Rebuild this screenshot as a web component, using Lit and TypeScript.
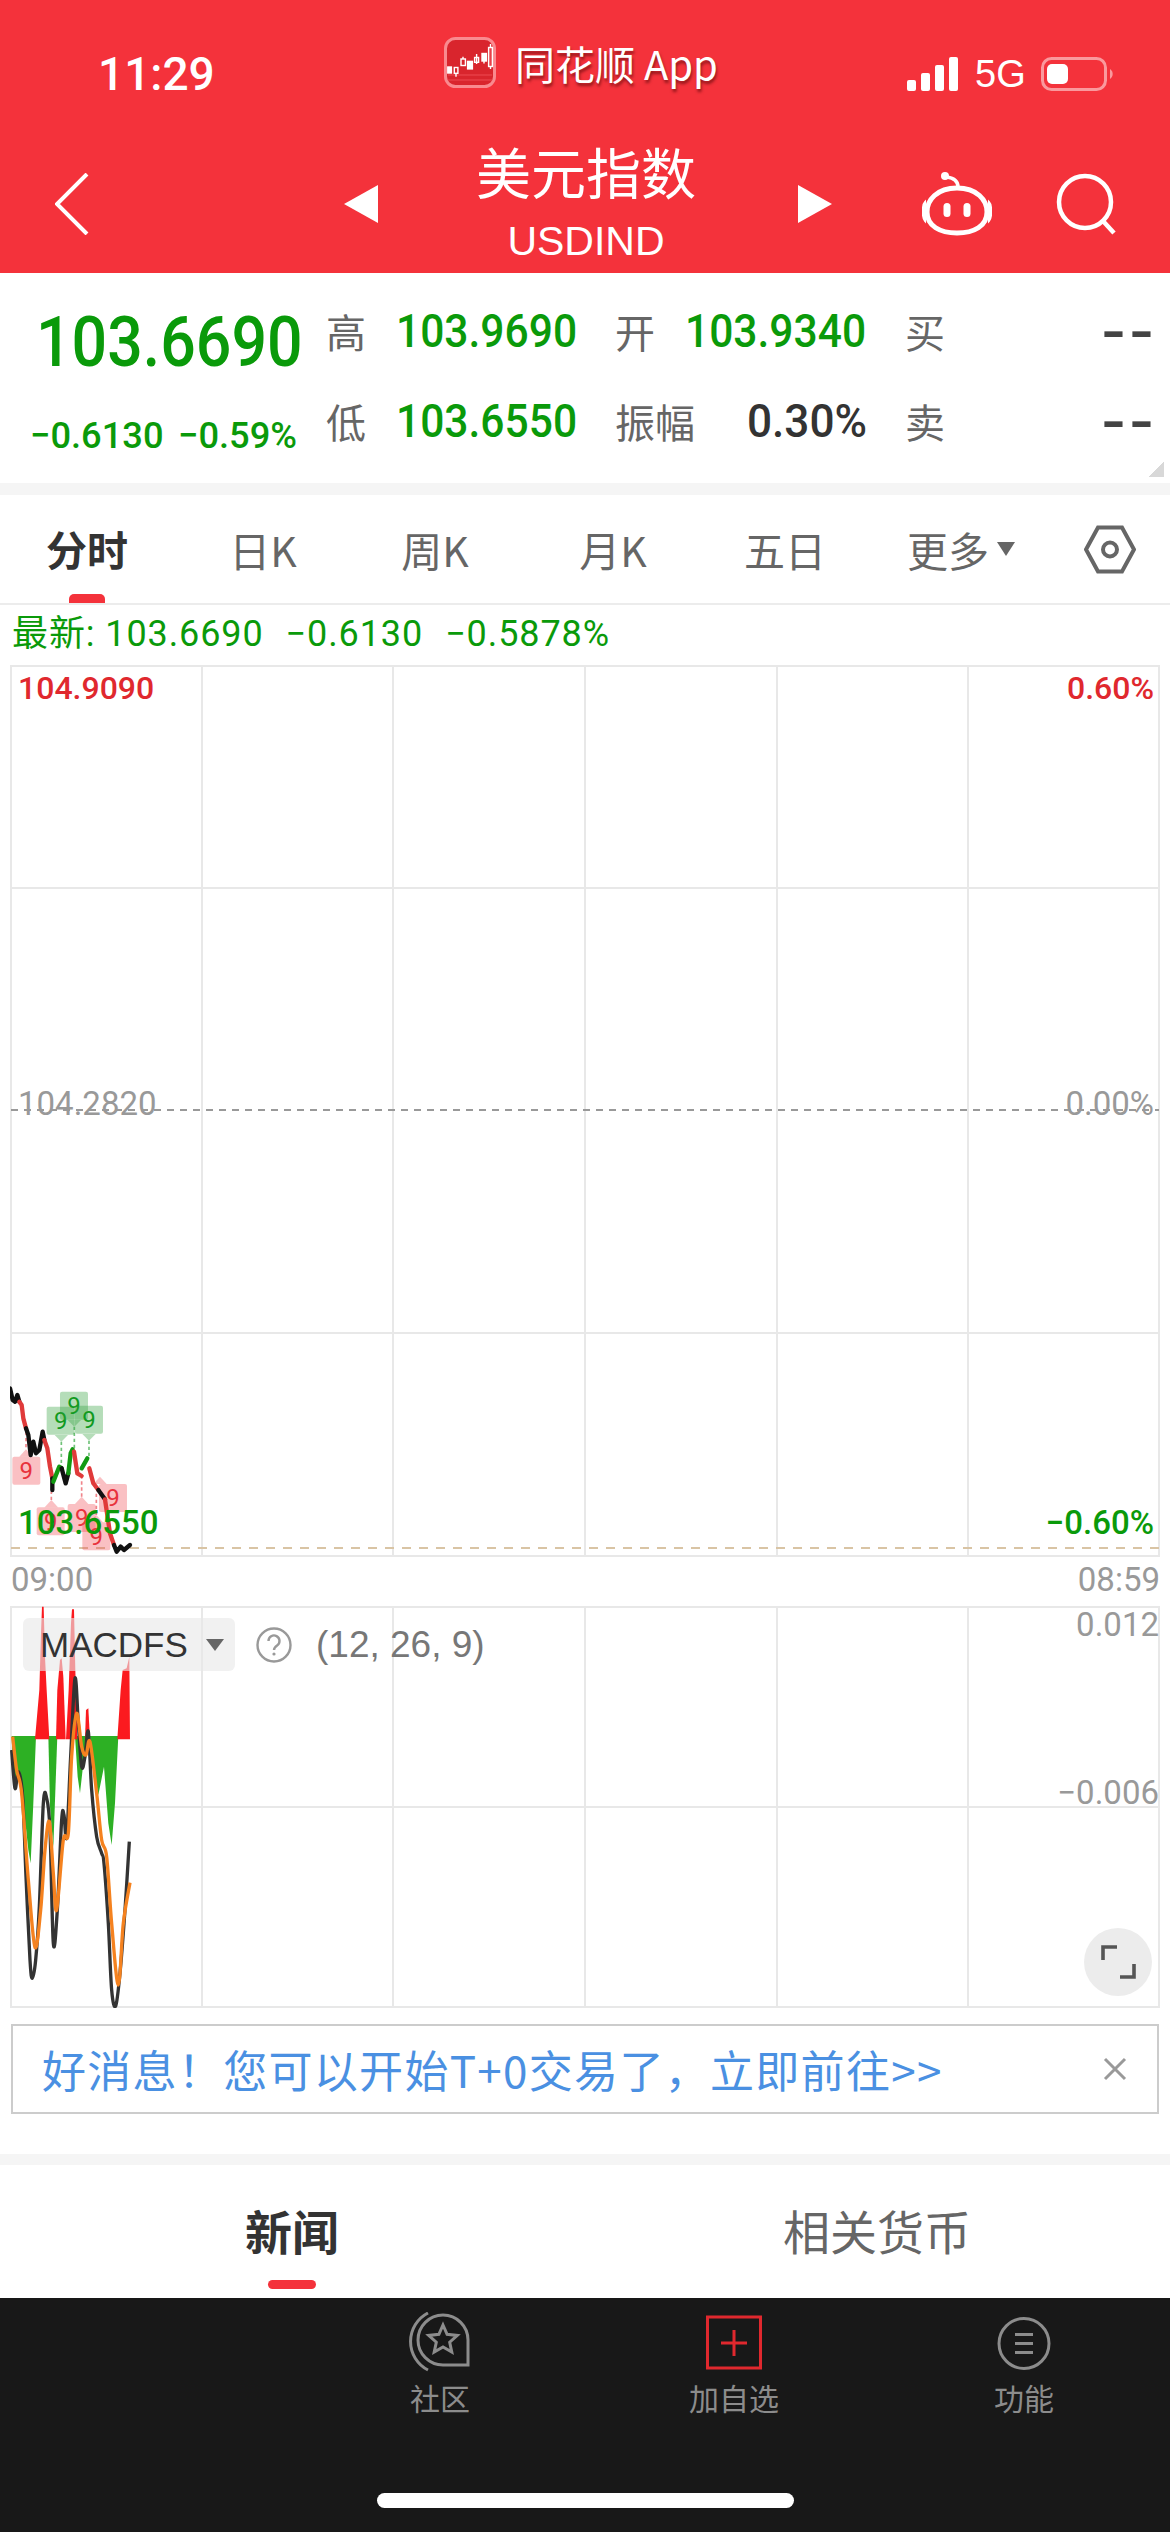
import { LitElement, css, html, svg } from "lit";
import { customElement } from "lit/decorators.js";

// chart traces are written in pixels of a 3x crop, scaled down by the <g> wrapper
const PRICE_SEGMENTS: [string, string][] = [
  ["#111", "30,85 38,120 45,125 52,105 58,125"],
  ["#e03a3a", "58,125 65,135 70,175 78,205"],
  ["#111", "78,205 85,225 92,285 100,245 108,280 118,270 128,215 133,240"],
  ["#e03a3a", "133,240 142,265 150,320 157,355"],
  ["#111", "157,355 157,390"],
  ["#129a12", "160,365 178,320 185,325"],
  ["#111", "185,325 197,370 205,340"],
  ["#129a12", "205,340 212,280 218,268"],
  ["#e03a3a", "222,275 232,340 245,348"],
  ["#129a12", "245,325 262,295"],
  ["#e03a3a", "268,325 280,370 295,390"],
  ["#111", "295,390 315,418"],
  ["#e03a3a", "315,418 330,520 342,555"],
  ["#111", "342,555 350,575 362,560 372,570 390,555"],
];

const NINE_TAGS = [
  { x: 37, y: 290, up: true, tipX: 78, tipY: 262, toY: 210, red: true },
  { x: 110, y: 442, up: true, tipX: 154, tipY: 420, toY: 395, red: true },
  { x: 203, y: 432, up: true, tipX: 245, tipY: 410, toY: 350, red: true },
  { x: 247, y: 487, up: true, tipX: 289, tipY: 465, toY: 395, red: true },
  { x: 297, y: 372, up: true, tipX: 300, tipY: 372, toY: 372, red: true },
  { x: 140, y: 140, up: false, tipX: 184, tipY: 245, toY: 320, red: false },
  { x: 180, y: 95, up: false, tipX: 223, tipY: 200, toY: 268, red: false },
  { x: 225, y: 137, up: false, tipX: 267, tipY: 242, toY: 295, red: false },
];

const MACD_RED = [
  "105,448 118,300 123,130 126,50 131,50 135,200 140,300 148,448",
  "168,448 172,300 180,210 185,205 190,260 197,448",
  "198,448 206,300 213,100 216,58 222,58 226,240 232,448",
  "255,448 258,360 265,355 270,448",
  "352,448 362,300 368,240 380,235 388,200 390,448",
];
const MACD_GREEN = [
  "35,438 40,560 45,595 50,540 60,560 70,640 85,780 92,820 100,640 108,438",
  "145,438 150,650 160,770 172,438",
  "225,438 233,560 240,610 250,520 270,438",
  "270,438 285,560 295,615 312,530 325,700 335,765 345,640 355,438",
];
const MACD_DIF: number[][] = [
  [35, 480], [45, 595], [55, 545], [68, 620], [78, 860], [90, 1110], [97, 1165], [107, 1110], [118, 950],
  [130, 640], [140, 625], [150, 720], [160, 1060], [172, 960], [185, 690], [192, 675], [200, 740], [212, 500],
  [225, 265], [235, 400], [245, 530], [255, 500], [265, 425], [275, 600], [290, 740], [305, 790], [312, 820],
  [325, 1000], [335, 1200], [347, 1248], [360, 1150], [375, 960], [388, 755],
];
const MACD_DEA: number[][] = [
  [38, 440], [50, 540], [65, 610], [85, 870], [105, 1072], [122, 960], [135, 780], [148, 695], [160, 850],
  [170, 960], [190, 750], [205, 730], [215, 500], [230, 370], [245, 470], [258, 495], [270, 455], [290, 610],
  [305, 750], [320, 800], [335, 1000], [355, 1185], [370, 1000], [390, 878],
];

const V_LINES = [202, 393, 585, 777, 968];

// catmull-rom through the points, the indicator lines are smooth in the app
function smooth(pts: number[][]) {
  let d = `M${pts[0][0]} ${pts[0][1]}`;
  for (let i = 0; i < pts.length - 1; i++) {
    const p0 = pts[Math.max(i - 1, 0)];
    const p1 = pts[i];
    const p2 = pts[i + 1];
    const p3 = pts[Math.min(i + 2, pts.length - 1)];
    const c1x = p1[0] + (p2[0] - p0[0]) / 6;
    const c1y = p1[1] + (p2[1] - p0[1]) / 6;
    const c2x = p2[0] - (p3[0] - p1[0]) / 6;
    const c2y = p2[1] - (p3[1] - p1[1]) / 6;
    d += `C${c1x} ${c1y} ${c2x} ${c2y} ${p2[0]} ${p2[1]}`;
  }
  return d;
}

@customElement("app-root")
export class AppRoot extends LitElement {
  static styles = css`
    :host {
      display: block;
      width: 1170px;
      height: 2532px;
      background: #fff;
      overflow: hidden;
      font-family: Roboto, "Noto Sans CJK SC", sans-serif;
    }
    .head {
      height: 273px;
      background: #f4323b;
      color: #fff;
      box-sizing: border-box;
      padding-top: 36px;
    }
    .status {
      display: grid;
      grid-template-columns: 346px 71px 392px 134px 1fr;
      margin-left: 98px;
      height: 56px;
      align-items: end;
    }
    .time {
      font-size: 46px;
      font-weight: 500;
      line-height: 36px;
    }
    .logo-wrap {
      align-self: start;
    }
    .logo {
      display: block;
    }
    .app-name {
      font-family: "Noto Sans CJK SC", sans-serif;
      font-size: 40px;
      line-height: 54px;
      text-shadow: 1px 3px 3px rgba(70, 0, 0, 0.55);
      align-self: start;
    }
    .signal {
      display: flex;
      align-items: flex-end;
      gap: 5px;
      height: 34px;
      margin-bottom: 1px;
    }
    .signal i {
      width: 9px;
      background: #fff;
      border-radius: 2px;
    }
    .net {
      font-family: "Liberation Sans", sans-serif;
      font-size: 38px;
      line-height: 34px;
      margin-left: 12px;
    }
    .battery {
      display: flex;
      align-items: center;
      margin-bottom: 1px;
    }
    .nav {
      display: grid;
      grid-template-columns: 344px 34px 420px 34px 90px 70px 64px 60px;
      align-items: center;
      height: 138px;
      margin-top: 43px;
    }
    .back {
      margin-left: 55px;
      display: block;
    }
    .title {
      text-align: center;
      align-self: start;
      margin-top: -4px;
      padding-right: 4px;
    }
    .title b {
      display: block;
      font-family: "Noto Sans CJK SC", sans-serif;
      font-weight: 400;
      font-size: 55px;
      line-height: 78px;
    }
    .title span {
      display: block;
      font-family: "Liberation Sans", sans-serif;
      font-size: 41px;
      line-height: 46px;
      margin-top: 9px;
    }
    .quote {
      height: 210px;
      box-sizing: border-box;
      position: relative;
      display: grid;
      grid-template-columns: 326px 1fr;
    }
    .corner {
      position: absolute;
      right: 6px;
      bottom: 6px;
      width: 15px;
      height: 15px;
      background: linear-gradient(135deg, transparent 50%, #d8d8d8 50%);
    }
    .cond {
      display: inline-block;
      transform: scaleX(0.925);
      transform-origin: 0 50%;
      white-space: nowrap;
    }
    .price {
      padding: 29px 0 0 35px;
      color: #0a9a0a;
    }
    .price b {
      display: block;
      font-size: 70px;
      line-height: 80px;
      font-weight: 500;
      margin-left: 1px;
    }
    .price b .cond {
      transform: scaleX(0.895);
    }
    .price p {
      margin: 32px 0 0 -5px;
      font-size: 37px;
      font-weight: 500;
      line-height: 44px;
      white-space: nowrap;
      display: flex;
    }
    .price p .cond {
      width: 160px;
      transform: scaleX(0.98);
    }
    .stats {
      display: grid;
      grid-template-columns: 70px 219px 70px 220px 40px 207px;
      grid-auto-rows: 90px;
      padding-top: 13px;
      align-items: center;
      height: 180px;
    }
    .stats .k {
      font-family: "Noto Sans CJK SC", sans-serif;
      font-size: 40px;
      line-height: 90px;
      color: #666;
      white-space: nowrap;
    }
    .stats .v {
      font-size: 46px;
      font-weight: 500;
      color: #0a9a0a;
      line-height: 90px;
    }
    .stats .dark {
      color: #333;
      text-align: right;
      padding-right: 38px;
    }
    .stats .dark .cond {
      transform: scaleX(0.96);
      transform-origin: 100% 50%;
    }
    .stats .none {
      color: #444;
      font-size: 76px;
      font-weight: 400;
      letter-spacing: 7px;
      text-align: right;
      line-height: 86px;
      margin-right: -7px;
      white-space: nowrap;
    }
    .band {
      height: 12px;
      background: #f5f5f5;
    }
    .periods {
      display: grid;
      grid-template-columns: 174px 178px 166px 190px 154px 198px 100px;
      height: 110px;
      border-bottom: 2px solid #ececec;
      box-sizing: border-box;
      align-items: center;
      justify-items: center;
      font-family: "Noto Sans CJK SC", sans-serif;
      font-size: 41px;
      color: #666;
    }
    .periods .on {
      color: #333;
      font-weight: 700;
      align-self: stretch;
      display: flex;
      align-items: center;
      position: relative;
      padding-bottom: 2px;
    }
    .periods .on::after {
      content: "";
      position: absolute;
      left: 23px;
      right: 23px;
      bottom: 0;
      height: 9px;
      border-radius: 5px 5px 0 0;
      background: #f4323b;
    }
    .more {
      display: flex;
      align-items: center;
      gap: 8px;
    }
    .latest {
      height: 60px;
      display: flex;
      align-items: baseline;
      gap: 22px;
      padding-left: 12px;
      color: #0a9a0a;
      font-size: 36px;
      line-height: 58px;
      letter-spacing: 0.9px;
      white-space: nowrap;
    }
    .chart {
      position: relative;
      margin-left: 10px;
      width: 1150px;
    }
    .chart > svg {
      display: block;
    }
    .grid-line {
      stroke: #e8e8e8;
      stroke-width: 2;
      fill: none;
    }
    .price-box {
      height: 892px;
    }
    .lab {
      position: absolute;
      font-size: 33px;
      line-height: 40px;
      white-space: nowrap;
    }
    .l {
      left: 8px;
    }
    .r {
      right: 6px;
    }
    .red {
      color: #e0282e;
      font-size: 32px;
      font-weight: 500;
    }
    .gray {
      color: #999;
    }
    .green {
      color: #0a9a0a;
      font-weight: 500;
    }
    .nine {
      font: 72px Roboto, sans-serif;
      text-anchor: middle;
    }
    .times {
      height: 49px;
      margin: 0 10px 0 11px;
      display: flex;
      justify-content: space-between;
      align-items: center;
      color: #999;
      font-size: 33px;
      padding-bottom: 5px;
      box-sizing: border-box;
    }
    .macd-box {
      height: 402px;
    }
    .macd-tag {
      position: absolute;
      left: 13px;
      top: 12px;
      display: flex;
      align-items: center;
    }
    .pill {
      width: 212px;
      height: 53px;
      box-sizing: border-box;
      padding-left: 17px;
      gap: 18px;
      display: flex;
      align-items: center;
      background: rgba(232, 232, 232, 0.62);
      border-radius: 6px;
      color: #333;
      font-family: "Liberation Sans", sans-serif;
      font-size: 35px;
    }
    .args {
      font-family: "Liberation Sans", sans-serif;
      font-size: 37px;
      color: #777;
      margin-left: 24px;
    }
    .help {
      margin-left: 21px;
      display: block;
    }
    .expand {
      position: absolute;
      left: 1074px;
      top: 322px;
      width: 68px;
      height: 68px;
      border-radius: 50%;
      background: #ececec;
      display: flex;
      align-items: center;
      justify-content: center;
    }
    .banner {
      margin: 16px 11px 0;
      height: 90px;
      border: 2px solid #ccc;
      box-sizing: border-box;
      display: flex;
      align-items: center;
      justify-content: space-between;
      padding: 0 30px 0 29px;
      color: #4a90e2;
      font-family: "Noto Sans CJK SC", sans-serif;
      font-size: 44px;
      letter-spacing: 1.3px;
      white-space: nowrap;
    }
    .band.low {
      margin-top: 40px;
      height: 11px;
    }
    .news {
      height: 133px;
      display: grid;
      grid-template-columns: 584px 1fr;
      font-family: "Noto Sans CJK SC", sans-serif;
      font-size: 47px;
      color: #666;
      justify-items: center;
      align-items: center;
    }
    .news span {
      padding-bottom: 5px;
    }
    .news .on {
      color: #333;
      font-weight: 700;
      position: relative;
      align-self: stretch;
      display: flex;
      align-items: center;
    }
    .news .on::after {
      content: "";
      position: absolute;
      left: 23px;
      right: 23px;
      bottom: 9px;
      height: 9px;
      border-radius: 5px;
      background: #f4323b;
    }
    .foot {
      height: 234px;
      background: #181818;
      box-sizing: border-box;
      padding-top: 14px;
    }
    .tools {
      display: grid;
      grid-template-columns: 590px 288px 292px;
      height: 125px;
    }
    .tool {
      display: flex;
      flex-direction: column;
      align-items: center;
      color: #8c8c8c;
      font-family: "Noto Sans CJK SC", sans-serif;
      font-size: 30px;
      line-height: 40px;
    }
    .tool svg {
      display: block;
      margin-bottom: 5px;
    }
    .tool.first {
      padding-left: 290px;
    }
    .home {
      width: 417px;
      height: 15px;
      margin: 56px 0 0 377px;
      border-radius: 8px;
      background: #fff;
    }
  `;

  private renderLogo() {
    return html`<svg class="logo" width="52" height="54" viewBox="0 0 52 54">
      <rect x="1.5" y="2.5" width="49" height="48" rx="10" fill="#d9252d" stroke="#f98a8f" stroke-width="3" />
      <path d="M4 39H48M4 44H48" stroke="#ee4a52" stroke-width="1" />
      <g fill="none" stroke="#fff" stroke-width="1.4">
        <path d="M12 37.3V40.7M19 20.7V23M32.6 18V28M40 25V27.5M46.5 8V33" />
        <rect x="3.8" y="31" width="3.6" height="6" fill="#fff" />
        <rect x="10.3" y="31.5" width="3.6" height="5.8" />
        <rect x="17" y="23" width="4.4" height="6.5" />
        <rect x="23.6" y="25.4" width="4.8" height="7.5" fill="#fff" />
        <rect x="30.6" y="21.5" width="4" height="4.8" />
        <rect x="38" y="17.5" width="4.4" height="7.5" fill="#fff" />
        <rect x="44.6" y="11.5" width="3.8" height="19" fill="#e84049" />
      </g>
    </svg>`;
  }

  private renderPriceChart() {
    return html`<div class="chart price-box">
      <svg width="1150" height="892" viewBox="10 665 1150 892">
        <rect class="grid-line" x="11" y="666" width="1148" height="890" />
        ${V_LINES.map((x) => svg`<line class="grid-line" x1=${x} x2=${x} y1="666" y2="1556" />`)}
        <line class="grid-line" x1="11" x2="1159" y1="888" y2="888" />
        <line class="grid-line" x1="11" x2="1159" y1="1333" y2="1333" />
        <line x1="11" x2="1159" y1="1110" y2="1110" stroke="#999" stroke-width="2" stroke-dasharray="7 6" />
        <line x1="11" x2="1159" y1="1548" y2="1548" stroke="#d9c4a4" stroke-width="2" stroke-dasharray="9 8" />
        <g transform="translate(0 1360) scale(0.3333)">
          ${NINE_TAGS.map((t) => {
            const fill = t.red ? "rgba(240,70,80,.34)" : "rgba(50,160,60,.36)";
            const ink = t.red ? "#e8323c" : "#119a1f";
            const tri = t.up
              ? `${t.tipX - 20},${t.y} ${t.tipX},${t.y - 22} ${t.tipX + 20},${t.y}`
              : `${t.tipX - 20},${t.y + 85} ${t.tipX},${t.y + 105} ${t.tipX + 20},${t.y + 85}`;
            return svg`
              <line x1=${t.tipX} x2=${t.tipX} y1=${t.tipY} y2=${t.toY} stroke=${ink} stroke-opacity=".6" stroke-width="5" stroke-dasharray="10 8" />
              <rect x=${t.x} y=${t.y} width="84" height="84" rx="6" fill=${fill} />
              <polygon points=${tri} fill=${fill} />
              <text class="nine" x=${t.x + 42} y=${t.y + 67} fill=${ink}>9</text>`;
          })}
          ${PRICE_SEGMENTS.map(
            ([color, pts]) =>
              svg`<polyline points=${pts} fill="none" stroke=${color} stroke-width="13" stroke-linejoin="round" stroke-linecap="round" />`
          )}
        </g>
      </svg>
      <span class="lab l red" style="top:3px">104.9090</span>
      <span class="lab r red" style="top:3px">0.60%</span>
      <span class="lab l gray" style="top:419px">104.2820</span>
      <span class="lab r gray" style="top:419px">0.00%</span>
      <span class="lab l green" style="top:838px">103.6550</span>
      <span class="lab r green" style="top:838px">−0.60%</span>
    </div>`;
  }

  private renderMacd() {
    return html`<div class="chart macd-box">
      <svg width="1150" height="402" viewBox="10 1606 1150 402">
        <rect class="grid-line" x="11" y="1607" width="1148" height="400" />
        ${V_LINES.map((x) => svg`<line class="grid-line" x1=${x} x2=${x} y1="1607" y2="2007" />`)}
        <line class="grid-line" x1="11" x2="1159" y1="1807" y2="1807" />
        <g transform="translate(0 1590) scale(0.3333)">
          ${MACD_GREEN.map((p) => svg`<polygon points=${p} fill="#2db024" />`)}
          ${MACD_RED.map((p) => svg`<polygon points=${p} fill="#fb1a1f" />`)}
          <path d=${smooth(MACD_DIF)} fill="none" stroke="#333" stroke-width="10" />
          <path d=${smooth(MACD_DEA)} fill="none" stroke="#f5821f" stroke-width="10" />
        </g>
      </svg>
      <div class="macd-tag">
        <span class="pill">
          MACDFS
          <svg width="18" height="12" viewBox="0 0 18 12"><path d="M0 0H18L9 12Z" fill="#666" /></svg>
        </span>
        <svg class="help" width="36" height="36" viewBox="0 0 36 36">
          <circle cx="18" cy="18" r="16.5" fill="none" stroke="#999" stroke-width="2.4" />
          <path d="M12.5 14a5.5 5.5 0 1 1 8.6 4.5c-2 1.4-3.1 2.3-3.1 4.6" fill="none" stroke="#999" stroke-width="2.4" />
          <circle cx="18" cy="27" r="1.6" fill="#999" />
        </svg>
        <span class="args">(12, 26, 9)</span>
      </div>
      <span class="lab r gray" style="top:-1px;right:1px">0.012</span>
      <span class="lab r gray" style="top:167px;right:1px">−0.006</span>
      <div class="expand">
        <svg width="38" height="38" viewBox="0 0 38 38" fill="none" stroke="#555" stroke-width="3.6">
          <path d="M4 17V4H18" />
          <path d="M35 21V34H21" />
        </svg>
      </div>
    </div>`;
  }

  render() {
    return html`
      <header class="head">
        <div class="status">
          <span class="time">11:29</span>
          <span class="logo-wrap">${this.renderLogo()}</span>
          <span class="app-name">同花顺 App</span>
          <span class="signal">
            <i style="height:11px"></i><i style="height:18px"></i><i style="height:26px"></i><i style="height:34px"></i>
            <span class="net">5G</span>
          </span>
          <span class="battery">
            <svg width="73" height="34" viewBox="0 0 73 34">
              <rect x="1.5" y="1.5" width="63" height="31" rx="9" fill="none" stroke="#fff" stroke-opacity=".5" stroke-width="3" />
              <rect x="6" y="7" width="21" height="20" rx="5" fill="#fff" />
              <path d="M69 12a6 6 0 0 1 0 10Z" fill="#fff" fill-opacity=".5" />
            </svg>
          </span>
        </div>
        <nav class="nav">
          <svg class="back" width="34" height="62" viewBox="0 0 34 62" fill="none" stroke="#fff" stroke-width="4">
            <path d="M32 1 2 31l30 30" />
          </svg>
          <svg width="34" height="38" viewBox="0 0 34 38"><path d="M34 0V38L0 19Z" fill="#fff" /></svg>
          <div class="title"><b>美元指数</b><span>USDIND</span></div>
          <svg width="34" height="38" viewBox="0 0 34 38"><path d="M0 0V38L34 19Z" fill="#fff" /></svg>
          <span></span>
          <svg width="70" height="64" viewBox="0 0 70 64" fill="none" stroke="#fff" stroke-width="5">
            <path d="M36 15C36 9 31 6 25 5" stroke-width="3.5" />
            <circle cx="23" cy="4" r="4" fill="#fff" stroke="none" />
            <path d="M35 16C55 16 65 28 65 40C65 54 52 61 35 61C18 61 5 54 5 40C5 28 15 16 35 16Z" />
            <path d="M3 30C0 33 0 46 3 49ZM67 30C70 33 70 46 67 49Z" fill="#fff" stroke="#fff" stroke-width="2" />
            <rect x="21.500" y="31" width="7" height="14" rx="3.500" fill="#fff" stroke="none" />
            <rect x="41.500" y="31" width="7" height="14" rx="3.500" fill="#fff" stroke="none" />
          </svg>
          <span></span>
          <svg width="62" height="62" viewBox="0 0 62 62" fill="none" stroke="#fff" stroke-width="4.500">
            <circle cx="29" cy="29" r="26" />
            <path d="M47 48 58 60" />
          </svg>
        </nav>
      </header>

      <section class="quote">
        <div class="price">
          <b><span class="cond">103.6690</span></b>
          <p><span class="cond">−0.6130</span><span class="cond">−0.59%</span></p>
        </div>
        <div class="stats">
          <span class="k">高</span><span class="v"><span class="cond">103.9690</span></span>
          <span class="k">开</span><span class="v"><span class="cond">103.9340</span></span>
          <span class="k">买</span><span class="v none">--</span>
          <span class="k">低</span><span class="v"><span class="cond">103.6550</span></span>
          <span class="k">振幅</span><span class="v dark"><span class="cond">0.30%</span></span>
          <span class="k">卖</span><span class="v none">--</span>
        </div>
        <i class="corner"></i>
      </section>
      <div class="band"></div>

      <div class="periods">
        <span class="on">分时</span>
        <span>日K</span>
        <span>周K</span>
        <span>月K</span>
        <span>五日</span>
        <span class="more">
          更多
          <svg width="18" height="14" viewBox="0 0 18 14"><path d="M0 0H18L9 14Z" fill="#666" /></svg>
        </span>
        <svg width="52" height="49" viewBox="0 0 52 49" fill="none" stroke="#666" stroke-width="4">
          <path d="M2 24.500 14 2.500H38L50 24.500 38 46.500H14Z" />
          <circle cx="26" cy="24.500" r="7" />
        </svg>
      </div>

      <div class="latest">
        <span>最新: 103.6690</span><span>−0.6130</span><span>−0.5878%</span>
      </div>

      ${this.renderPriceChart()}
      <div class="times"><span>09:00</span><span>08:59</span></div>
      ${this.renderMacd()}

      <div class="banner">
        <span>好消息！您可以开始T+0交易了，立即前往>></span>
        <svg width="24" height="24" viewBox="0 0 24 24" stroke="#999" stroke-width="3">
          <path d="M2 2 22 22M22 2 2 22" />
        </svg>
      </div>
      <div class="band low"></div>

      <div class="news">
        <span class="on">新闻</span>
        <span>相关货币</span>
      </div>

      <footer class="foot">
        <div class="tools">
          <div class="tool first">
            <svg width="64" height="60" viewBox="0 0 64 60" fill="none" stroke="#8c8c8c" stroke-width="3">
              <path d="M60 28A25 25 0 1 0 35 53H60Z" />
              <path d="M20 1A32 32 0 0 0 20 58" />
              <path d="M35 13 39.100 22.300 49.300 23.400 41.700 30.200 43.800 40.100 35 35 26.200 40.100 28.300 30.200 20.700 23.400 30.900 22.300Z" />
            </svg>
            社区
          </div>
          <div class="tool">
            <svg width="56" height="60" viewBox="0 0 56 60" fill="none" stroke="#e0282e">
              <rect x="1.500" y="5" width="53" height="51" stroke-width="3" />
              <path d="M28 18V44M15 31H41" stroke-width="3" />
            </svg>
            加自选
          </div>
          <div class="tool">
            <svg width="54" height="60" viewBox="0 0 54 60" fill="none" stroke="#8c8c8c" stroke-width="3">
              <circle cx="27" cy="31.500" r="25" />
              <path d="M18 22.500H36M18 31.500H36M18 40.500H36" />
            </svg>
            功能
          </div>
        </div>
        <div class="home"></div>
      </footer>
    `;
  }
}
